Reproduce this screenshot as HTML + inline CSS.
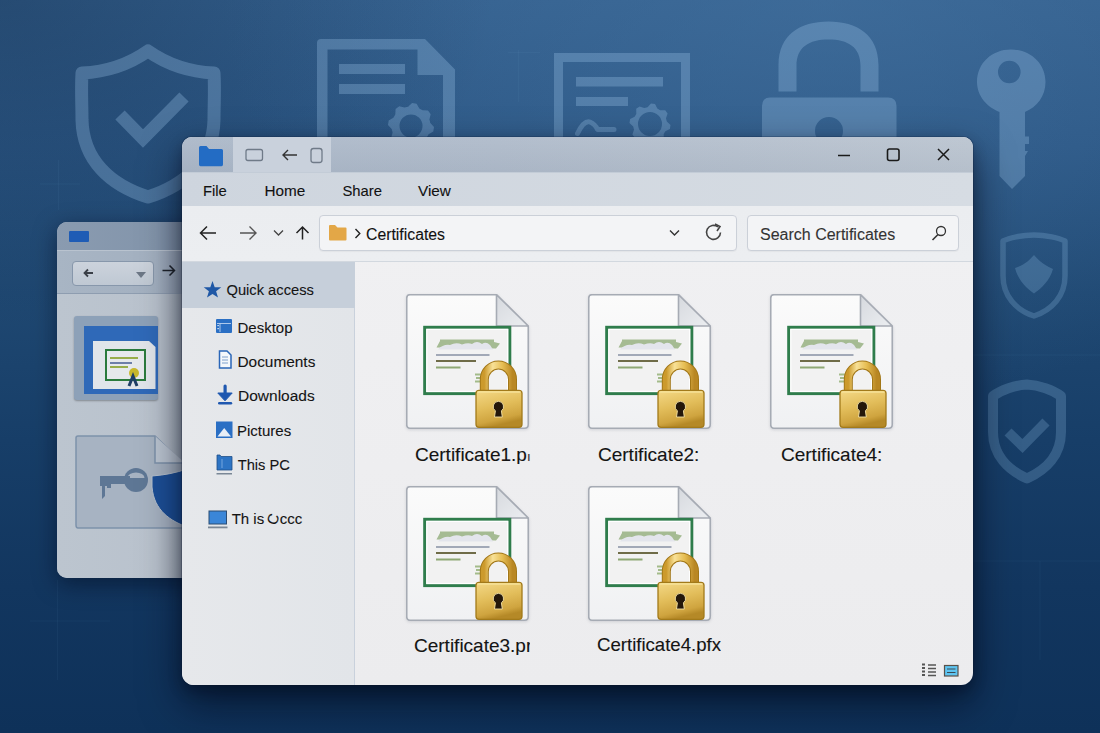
<!DOCTYPE html>
<html><head><meta charset="utf-8">
<style>
*{margin:0;padding:0;box-sizing:border-box}
html,body{width:1100px;height:733px;overflow:hidden}
body{position:relative;font-family:"Liberation Sans",sans-serif;color:#111;
background:linear-gradient(180deg,#34608e 0%,#2b5684 20%,#1f4872 40%,#173e68 60%,#12365f 80%,#0e3159 100%);}
.abs{position:absolute}
svg{position:absolute;overflow:visible}
.ci{filter:drop-shadow(0 1.5px 1.5px rgba(40,50,70,.15))}
#back{left:57px;top:222px;width:200px;height:356px;border-radius:10px;overflow:hidden;background:#b3bec9;box-shadow:0 6px 22px rgba(0,8,25,.5)}
#main{left:182px;top:137px;width:791px;height:548px;border-radius:10px 10px 12px 12px;overflow:hidden;background:linear-gradient(180deg,#f1f1f3 0%,#eeeef0 60%,#ececee 100%);box-shadow:0 18px 40px rgba(0,5,20,.6),0 6px 14px rgba(0,5,20,.3),0 0 0 1px rgba(20,40,70,.25)}
.t{position:absolute;white-space:nowrap;line-height:1;-webkit-text-stroke:0.1px currentColor}
.side{font-size:15px;color:#141414;-webkit-text-stroke:0.1px #141414}
.lab{font-size:19px;color:#141414;-webkit-text-stroke:0.12px #141414;overflow:hidden}
</style></head><body>
<svg width="1100" height="733" style="left:0;top:0" viewBox="0 0 1100 733">
 <defs>
  <radialGradient id="bgr" cx="0.75" cy="0" r="0.55"><stop offset="0" stop-color="#4675a3" stop-opacity="0.5"/><stop offset="1" stop-color="#4675a3" stop-opacity="0"/></radialGradient>
  <radialGradient id="bgl" cx="0" cy="0" r="0.45"><stop offset="0" stop-color="#061a33" stop-opacity="0.3"/><stop offset="1" stop-color="#061a33" stop-opacity="0"/></radialGradient>
 </defs>
 <rect width="1100" height="733" fill="url(#bgr)"/>
 <rect width="1100" height="733" fill="url(#bgl)"/>
 <g fill="none" stroke="rgba(160,200,235,0.3)" stroke-linejoin="round">
  <path d="M148,51 C128,65 104,72 82,73 C81,90 82,105 82,120 C83,160 110,185 148,197 C186,185 213,160 214,120 C214,105 215,90 214,73 C192,72 168,65 148,51 Z" stroke-width="13"/>
  <path d="M120,115 L143,138.5 L184,97" stroke-width="13" stroke-linejoin="miter"/>
  
  <path d="M577.5,133.5 Q584,120 590,122 Q595,124 597.5,129.5 H614" stroke-width="5" stroke-linecap="round"/>
 </g>
 <g fill="rgba(160,200,235,0.3)" fill-rule="evenodd">
  <path d="M317,43 Q317,39 321,39 H425 L455,69.5 V140 H317 Z M327.5,49.5 V140 H443 V75 H417.5 V49.5 Z"/>
  <rect x="339" y="64" width="66" height="10"/>
  <rect x="339" y="84" width="66" height="10"/>
  <path d="M554,53 H690 V140 H554 Z M563,62 V140 H681 V62 Z"/>
  <rect x="576" y="77" width="87" height="9.5"/>
  <rect x="576" y="97" width="52" height="9"/>
  <path d="M412.1,103.0 L416.6,103.7 L419.3,108.4 L422.6,110.3 L428.0,110.6 L430.7,114.2 L429.4,119.4 L430.3,123.1 L434.0,127.1 L433.3,131.6 L428.6,134.3 L426.7,137.6 L426.4,143.0 L422.8,145.7 L417.6,144.4 L413.9,145.3 L409.9,149.0 L405.4,148.3 L402.7,143.6 L399.4,141.7 L394.0,141.4 L391.3,137.8 L392.6,132.6 L391.7,128.9 L388.0,124.9 L388.7,120.4 L393.4,117.7 L395.3,114.4 L395.6,109.0 L399.2,106.3 L404.4,107.6 L408.1,106.7 Z M399.5,126.0 a11.5,11.5 0 1 0 23.0,0 a11.5,11.5 0 1 0 -23.0,0 Z"/>
  <path d="M651.0,103.5 L655.0,104.1 L657.3,108.6 L660.1,110.3 L665.2,110.2 L667.6,113.5 L666.0,118.3 L666.8,121.5 L670.5,125.0 L669.9,129.0 L665.4,131.3 L663.7,134.1 L663.8,139.2 L660.5,141.6 L655.7,140.0 L652.5,140.8 L649.0,144.5 L645.0,143.9 L642.7,139.4 L639.9,137.7 L634.8,137.8 L632.4,134.5 L634.0,129.7 L633.2,126.5 L629.5,123.0 L630.1,119.0 L634.6,116.7 L636.3,113.9 L636.2,108.8 L639.5,106.4 L644.3,108.0 L647.5,107.2 Z M638.0,124.0 a12,12 0 1 0 24,0 a12,12 0 1 0 -24,0 Z"/>
  <path d="M778.5,91.5 V65 C778.5,35 800,21.5 828.5,21.5 C857,21.5 878.5,35 878.5,65 V91.5 H860.5 V66 C860.5,47 848,39.5 828.5,39.5 C809,39.5 796.5,47 796.5,66 V91.5 Z"/>
  <path d="M770,97.5 H888 Q896.5,97.5 896.5,106 V140 H762 V106 Q762,97.5 770,97.5 Z M815,131 a14,14 0 1 0 28,0 a14,14 0 1 0 -28,0 Z"/>
  <path d="M1011,49.5 C1030,49.5 1045.5,63 1045.5,82 C1045.5,96 1037,107 1025,112 V136.5 H1029 V144 H1025 V151 H1028 L1025,156 V176 L1012,189 L999.5,176 V112 C987,107 977,96 977,82 C977,63 992,49.5 1011,49.5 Z M998,72 a11.3,11.3 0 1 0 22.6,0 a11.3,11.3 0 1 0 -22.6,0 Z"/>
  
 </g>
 <g fill="none" stroke="rgba(150,195,235,0.24)" stroke-linejoin="round">
  <path d="M1034,235 C1022,235 1009,238 1003,241 V276 C1003,296 1016,310 1034,316 C1052,310 1065,296 1065,276 V241 C1059,238 1046,235 1034,235 Z" stroke-width="5.5"/>
  <path d="M1027,384.5 C1015,385 1001,390 993,396 V432 C993,455 1008,470 1027,478.5 C1046,470 1061,455 1061,432 V396 C1053,390 1039,385 1027,384.5 Z" stroke-width="10"/>
  <path d="M1008,432 L1022.5,446 L1046,422" stroke-width="10" stroke-linejoin="miter"/>
 </g>
 <path fill="rgba(150,195,235,0.24)" d="M1034,255 C1028,262 1022,266 1015,268 C1018,280 1026,288 1034,293.5 C1042,288 1050,280 1053,269 C1046,266 1040,262 1034,255 Z"/>
 <g stroke="rgba(140,190,235,0.05)" stroke-width="1" fill="none">
  <path d="M518.5,50 V102 M508,52.5 H540"/>
  <path d="M40,184 H80 M58.5,160 V210"/>
  <path d="M973,355 H1100"/>
  <path d="M973,561 H1100 M1040,561 V660"/>
  <path d="M30,621 H110 M57.5,580 V680"/>
 </g>
</svg>

<!-- back window -->
<div id="back" class="abs">
  <div class="abs" style="left:0;top:0;width:200px;height:28px;background:linear-gradient(90deg,#8a9bb0 0%,#8395ab 50%,#7689a0 62.5%)"></div>
  <div class="abs" style="left:12px;top:9px;width:20px;height:11px;background:#1f5cb5;border-radius:1px"></div>
  <div class="abs" style="left:0;top:28px;width:200px;height:44px;background:linear-gradient(90deg,#a8b5c4 0%,#a3b0c0 50%,#8e9caf 62.5%);border-top:1px solid #b9c3cf;border-bottom:1px solid #8e9db0"></div>
  <div class="abs" style="left:14.5px;top:38.5px;width:82px;height:25px;background:linear-gradient(180deg,#ccd3dc,#bfc8d3);border:1px solid #8797ab;border-radius:4px"></div>
  <svg width="20" height="14" style="left:22px;top:44px"><path d="M5.5,7 H14 M9,3.5 L5.5,7 L9,10.5" fill="none" stroke="#3a3f47" stroke-width="1.8"/></svg>
  <div class="abs" style="left:78.5px;top:50px;width:0;height:0;border-left:5px solid transparent;border-right:5px solid transparent;border-top:6px solid #6c7786"></div>
  <svg width="20" height="14" style="left:104px;top:42px"><path d="M1.5,6.5 H13.5 M8.5,1.5 L13.5,6.5 L8.5,11.5" fill="none" stroke="#1f242b" stroke-width="1.5"/></svg>
  <div class="abs" style="left:0;top:72px;width:200px;height:284px;background:linear-gradient(90deg,#bcc5cf 0%,#b9c2cd 50%,#aeb8c3 57%,#9fa9b6 62.5%)"></div>
  <!-- tile -->
  <div class="abs" style="left:17px;top:94px;width:84px;height:84px;background:#8da1b8;border-radius:3px;box-shadow:0 1px 2px rgba(0,0,0,.3)"></div>
  <div class="abs" style="left:27px;top:104px;width:74px;height:68px;background:#2f69b8"></div>
  <svg width="64" height="50" style="left:36px;top:119px"><path d="M0,0 H56 L62.5,6 V48 H0 Z" fill="#e1e5ea"/></svg>
  <div class="abs" style="left:48px;top:127px;width:41px;height:31.5px;border:2px solid #2a7a3c;background:#e6e9ec"></div>
  <div class="abs" style="left:53px;top:135px;width:28px;height:2px;background:#98ae4a"></div>
  <div class="abs" style="left:53px;top:140px;width:22px;height:1.5px;background:#6d7fa8"></div>
  <div class="abs" style="left:53px;top:144px;width:18px;height:1.5px;background:#98ae4a"></div>
  <div class="abs" style="left:71.5px;top:146px;width:10px;height:10px;border-radius:50%;background:#c8b82c"></div>
  <svg width="14" height="14" style="left:69px;top:151px"><path d="M3,13 L7,3 L11,13" fill="none" stroke="#1f3f66" stroke-width="3"/></svg>
  <!-- key doc -->
  <svg width="140" height="100" style="left:18px;top:213px">
   <path d="M3,1 H80 L110,30 V90 Q110,93 107,93 H3 Q1,93 1,90 V3 Q1,1 3,1 Z" fill="#a7b3c2" stroke="#7d92ab" stroke-width="1.5"/>
   <path d="M80,1 V28 H110" fill="#bcc6d2" stroke="#7d92ab" stroke-width="1.5"/>
   <circle cx="61" cy="45" r="12" fill="#5e7795"/>
   <path d="M52.5,43 a8.5,5.5 0 0 1 17,0 Z" fill="#a7b3c2"/>
   <path d="M25,41 H55 V49 H36 V53 H32 V51 H30 V61 L27,64 V51 H25 Z" fill="#5e7795"/>
   <path d="M77,41 C90,40 100,38 112,34 V92 C96,86 79,76 77,52 Z" fill="#1c4f97" stroke="#b8c3cf" stroke-width="1"/>
  </svg>
</div>

<!-- main window -->
<div id="main" class="abs">
  <div class="abs" style="left:0;top:0;width:791px;height:35px;background:linear-gradient(180deg,rgba(255,255,255,.08),rgba(0,0,0,.02)),linear-gradient(90deg,#a9b6c7 0%,#adb9c9 40%,#b9c3cf 100%)"></div>
  <div class="abs" style="left:51px;top:0;width:98px;height:35px;background:#c9d1dc"></div>
  <div class="abs" style="left:0;top:35px;width:791px;height:34px;background:linear-gradient(90deg,#ced5de,#d6dce3);border-top:1px solid #c3ccd7"></div>
  <div class="abs" style="left:0;top:69px;width:791px;height:56px;background:linear-gradient(180deg,#ebedf0,#eceef1);border-bottom:1px solid #d2d8df"></div>
  <div class="abs" style="left:0;top:125px;width:173px;height:423px;background:linear-gradient(90deg,#e6e8eb,#e2e5e9);border-right:1px solid #c9d1dc"></div>
  <div class="abs" style="left:0;top:125px;width:173px;height:46px;background:#c6cfda"></div>

  <!-- titlebar icons -->
  <svg width="800" height="40" style="left:0;top:0">
    <path d="M17,10.5 Q17,9 18.5,9 H24.5 L27,12 H39.5 Q41,12 41,13.5 V27.5 Q41,29 39.5,29.2 H18.5 Q17,29 17,27.5 Z" fill="#236cc4"/>
    <rect x="64" y="12.5" width="16.5" height="11" rx="2" fill="none" stroke="#6f7a88" stroke-width="1.3"/>
    <path d="M101,18 H115 M106,13 L101,18 L106,23" fill="none" stroke="#333" stroke-width="1.4"/>
    <rect x="129" y="11.5" width="11" height="14" rx="2.5" fill="none" stroke="#6f7a88" stroke-width="1.3"/>
    <path d="M656,18.5 H668" stroke="#1a1a1a" stroke-width="1.7"/>
    <rect x="705.5" y="12" width="11.5" height="11.5" rx="2" fill="none" stroke="#1a1a1a" stroke-width="1.6"/>
    <path d="M756,12 L767,23 M767,12 L756,23" stroke="#1a1a1a" stroke-width="1.5"/>
  </svg>
  <!-- menu -->
  <div class="t" style="left:21px;top:47px;font-size:14.8px">File</div>
  <div class="t" style="left:82.5px;top:46px;font-size:15.3px">Home</div>
  <div class="t" style="left:160.5px;top:47px;font-size:14.8px">Share</div>
  <div class="t" style="left:236px;top:46px;font-size:15.3px">View</div>

  <!-- toolbar -->
  <svg width="800" height="60" style="left:0;top:69px">
    <path d="M18.5,27 H34 M25,20.5 L18.5,27 L25,33.5" fill="none" stroke="#222" stroke-width="1.5"/>
    <path d="M58,27 H74 M67.5,20.5 L74,27 L67.5,33.5" fill="none" stroke="#555" stroke-width="1.4"/>
    <path d="M92,24.5 L96.5,29 L101,24.5" fill="none" stroke="#444" stroke-width="1.3"/>
    <path d="M120.5,21 V33.5 M114.5,27 L120.5,21 L126.5,27" fill="none" stroke="#222" stroke-width="1.5"/>
  </svg>
  <div class="abs" style="left:137px;top:77.5px;width:417.5px;height:36.5px;background:#f3f4f6;border:1px solid #cbd0d8;border-radius:4px;box-shadow:0 1px 1px rgba(0,0,0,.04)"></div>
  <div class="abs" style="left:564.5px;top:77.5px;width:212px;height:36.5px;background:#f3f4f6;border:1px solid #cbd0d8;border-radius:4px;box-shadow:0 1px 1px rgba(0,0,0,.04)"></div>
  <svg width="800" height="60" style="left:0;top:69px">
    <path d="M147,20 Q147,19 148,19 H153 L155.5,21.5 H163.5 Q164.5,21.5 164.5,22.5 V33.5 Q164.5,34.5 163.5,34.5 H148 Q147,34.5 147,33.5 Z" fill="#e3a747"/>
    <path d="M173.5,23 L177.8,27.5 L173.5,32" fill="none" stroke="#222" stroke-width="1.4"/>
    <path d="M488,24.5 L492.5,29 L497,24.5" fill="none" stroke="#333" stroke-width="1.4"/>
    <path d="M536,21 A7,7 0 1 0 538.5,26.5" fill="none" stroke="#444" stroke-width="1.6"/>
    <path d="M533,18 L538,20.5 L535,25" fill="none" stroke="#444" stroke-width="1.6"/>
    <circle cx="759" cy="25" r="4.5" fill="none" stroke="#333" stroke-width="1.3"/>
    <path d="M756,28.5 L750.5,34" stroke="#333" stroke-width="1.6"/>
  </svg>
  <div class="t" style="left:184px;top:89.5px;font-size:15.8px">Certificates</div>
  <div class="t" style="left:578px;top:89.5px;font-size:16px;color:#333">Search Certificates</div>

  <!-- sidebar -->
  <svg width="180" height="420" style="left:0;top:125px">
    <path d="M30.5,19 L32.7,25.2 L39.3,25.3 L34.1,29.3 L36,35.6 L30.5,31.9 L25,35.6 L26.9,29.3 L21.7,25.3 L28.3,25.2 Z" fill="#1f58a6"/>
    <!-- desktop -->
    <rect x="34" y="57" width="16" height="14" rx="1" fill="#2a6fc4"/>
    <path d="M35,61.5 H49 M38,61.5 V70" stroke="#cfe0f5" stroke-width="0.8"/>
    <rect x="35.5" y="63" width="1.2" height="1.2" fill="#fff"/><rect x="35.5" y="66" width="1.2" height="1.2" fill="#fff"/>
    <!-- documents -->
    <path d="M37.5,89 H45 L49,93 V106 H37.5 Z" fill="#f4f7fb" stroke="#2a66b8" stroke-width="1.5"/>
    <path d="M40,95 H46 M40,98 H46 M40,101 H46" stroke="#7fa0cc" stroke-width="1"/>
    <!-- downloads -->
    <rect x="41.5" y="122.5" width="3.2" height="10" rx="1.5" fill="#1f58b0"/><path d="M35.8,131 H50.2 L43,138.8 Z" fill="#1f58b0" stroke="#1f58b0" stroke-width="1" stroke-linejoin="round"/>
    <rect x="36" y="140" width="14.2" height="2.4" rx="1.2" fill="#1f58b0"/>
    <!-- pictures -->
    <rect x="34" y="159.5" width="16.5" height="16.5" fill="#2a6fc4"/>
    <path d="M35.5,174.5 L42.2,166 L49,174.5 Z" fill="#e8eef6"/>
    <!-- this pc -->
    <path d="M35,193 H38 L39,194.5 H50 V208 H35 Z" fill="#2d74c4" stroke="#1f4f88" stroke-width="0.8"/>
    <path d="M40,197 V206" stroke="#86b3e6" stroke-width="0.8"/>
    <rect x="34.5" y="211" width="15.5" height="1.5" fill="#7a8796"/>
    <!-- laptop -->
    <rect x="27" y="249" width="17.5" height="13" fill="#3a86d8" stroke="#2b4c73" stroke-width="1"/>
    <rect x="26" y="264.5" width="19.5" height="1.8" fill="#7a8796"/>
  </svg>
  <div class="t side" style="left:44.5px;top:146px;font-size:14.7px">Quick access</div>
  <div class="t side" style="left:55.5px;top:183px">Desktop</div>
  <div class="t side" style="left:55.5px;top:217px;font-size:15.4px">Documents</div>
  <div class="t side" style="left:56px;top:251px;font-size:15.5px">Downloads</div>
  <div class="t side" style="left:55px;top:286px">Pictures</div>
  <div class="t side" style="left:55.7px;top:321px;font-size:14.7px">This PC</div>
  <div class="t side" style="left:49.7px;top:374px">Th is <span style="display:inline-block;transform:rotate(-70deg);transform-origin:50% 55%;margin-right:0.5px">C</span>ccc</div>

  <!-- view icons -->
  <svg width="60" height="30" style="left:735px;top:520px">
    <path d="M5,7.5 H8 M5,11 H8 M5,14.5 H8 M5,18 H8" stroke="#555" stroke-width="2.2"/>
    <path d="M11,8 H19 M11,11.5 H19 M11,15 H19 M11,18.5 H19" stroke="#555" stroke-width="1.3"/>
    <rect x="27.5" y="8.5" width="13.5" height="10.5" fill="#5ec4f0" stroke="#5a5048" stroke-width="1.2"/>
    <path d="M30,12 H38.5 M30,15.5 H38.5" stroke="#3a4a55" stroke-width="1.2"/>
  </svg>
</div>

<!-- cert icon symbol -->
<svg width="0" height="0" style="left:0;top:0">
 <defs>
  <linearGradient id="docg" x1="0" y1="0" x2="0" y2="1"><stop offset="0" stop-color="#fbfbfb"/><stop offset="1" stop-color="#f0f1f3"/></linearGradient>
  <linearGradient id="foldg" x1="0" y1="0" x2="1" y2="1"><stop offset="0" stop-color="#d6d9de"/><stop offset="1" stop-color="#eceef1"/></linearGradient>
  <linearGradient id="goldb" x1="0" y1="0" x2="0.3" y2="1"><stop offset="0" stop-color="#f4d987"/><stop offset="0.5" stop-color="#e2bd5a"/><stop offset="0.85" stop-color="#cfa43f"/><stop offset="1" stop-color="#b58927"/></linearGradient>
  <linearGradient id="golds" x1="0" y1="0" x2="1" y2="0"><stop offset="0" stop-color="#cc9a2c"/><stop offset="0.3" stop-color="#f8e197"/><stop offset="0.65" stop-color="#e6bd52"/><stop offset="1" stop-color="#b98723"/></linearGradient>
  <symbol id="cert" viewBox="0 0 124 136">
   <path d="M4,0.75 H90.5 L122.25,32.5 V130.5 Q122.25,134.25 118.5,134.25 H4 Q0.75,134.25 0.75,130.5 V4 Q0.75,0.75 4,0.75 Z" fill="url(#docg)" stroke="#a6abb4" stroke-width="1.6"/>
   <path d="M90.5,0.75 V32 H122.25 Z" fill="url(#foldg)" stroke="#a6abb4" stroke-width="1.6" stroke-linejoin="round"/>
   <rect x="18.7" y="33.3" width="85.1" height="66.3" fill="#f2f2f2" stroke="#2f7d4c" stroke-width="3"/>
   <rect x="20.8" y="35.4" width="80.9" height="62.1" fill="none" stroke="#ffffff" stroke-width="1.2"/>
   <path d="M30.5,53.5 L34,47 V45.5 H88 V48 L94,49.5 L90,54.5 Z" fill="#a5bb93"/>
   <path d="M32,55.5 Q37,50 44,51 Q50,48 56,50.5 Q62,48.5 66,50 Q71,46 76,50 Q80,47 84,51 L87,55.5 Z" fill="#e3e5ec"/>
   <path d="M30,61 H83.5" stroke="#a2a9b7" stroke-width="2"/>
   <path d="M30,67 H70" stroke="#6f6c48" stroke-width="2"/>
   <path d="M30,73.5 H54.5" stroke="#8fa874" stroke-width="2"/>
   <path d="M69,80.5 H76 M70,84 H76 M69,87.5 H76" stroke="#a3bb8a" stroke-width="2"/>
   <path d="M78.3,97 V85.5 A14.1,14.5 0 0 1 106.5,85.5 V97" fill="none" stroke="#a27718" stroke-width="9"/>
   <path d="M78.3,97 V85.5 A14.1,14.5 0 0 1 106.5,85.5 V97" fill="none" stroke="url(#golds)" stroke-width="7"/>
   <rect x="70" y="96.3" width="46" height="37" rx="3" fill="url(#goldb)" stroke="#a27a1a" stroke-width="1.3"/>
   <rect x="71.5" y="97" width="43" height="2" fill="#f7e29a" opacity="0.7"/>
   <path d="M92.4,107.3 a5.3,5.3 0 0 1 3,9.6 L96.3,123 H88.5 L89.4,116.9 a5.3,5.3 0 0 1 3,-9.6 Z" fill="#24170a" stroke="#f6e4a8" stroke-width="0.9"/>
  </symbol>
 </defs>
</svg>
<svg class="ci" width="124" height="136" style="left:405.5px;top:294px"><use href="#cert"/></svg>
<svg class="ci" width="124" height="136" style="left:588px;top:293.5px"><use href="#cert"/></svg>
<svg class="ci" width="124" height="136" style="left:770px;top:293.5px"><use href="#cert"/></svg>
<svg class="ci" width="124" height="136" style="left:405.5px;top:485.5px"><use href="#cert"/></svg>
<svg class="ci" width="124" height="136" style="left:587.5px;top:485.5px"><use href="#cert"/></svg>

<div class="t lab" style="left:415px;top:445px">Certificate1.p<span style="font-size:13px;color:#333">ı</span></div>
<div class="t lab" style="left:598px;top:445px">Certificate2:</div>
<div class="t lab" style="left:781px;top:445px">Certificate4:</div>
<div class="t lab" style="left:414px;top:635.5px;width:116px">Certificate3.pr</div>
<div class="t lab" style="left:597px;top:635.5px;font-size:18.6px">Certificate4.pfx</div>
</body></html>
